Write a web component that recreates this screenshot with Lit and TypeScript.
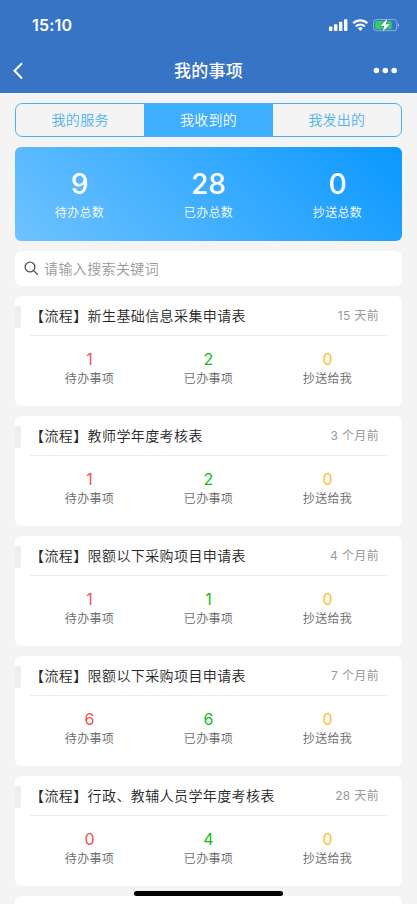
import { LitElement, html, css } from "lit";
import { customElement } from "lit/decorators.js";

interface Matter {
  title: string;
  time: string;
  counts: [number, number, number];
}

const totals = [
  { value: 9, label: "待办总数" },
  { value: 28, label: "已办总数" },
  { value: 0, label: "抄送总数" },
];

const matters: Matter[] = [
  { title: "【流程】新生基础信息采集申请表", time: "15 天前", counts: [1, 2, 0] },
  { title: "【流程】教师学年度考核表", time: "3 个月前", counts: [1, 2, 0] },
  { title: "【流程】限额以下采购项目申请表", time: "4 个月前", counts: [1, 1, 0] },
  { title: "【流程】限额以下采购项目申请表", time: "7 个月前", counts: [6, 6, 0] },
  { title: "【流程】行政、教辅人员学年度考核表", time: "28 天前", counts: [0, 4, 0] },
];

const kinds = [
  { cls: "todo", label: "待办事项" },
  { cls: "done", label: "已办事项" },
  { cls: "copy", label: "抄送给我" },
];

@customElement("app-root")
export class AppRoot extends LitElement {
  static styles = css`
    :host {
      display: flex;
      flex-direction: column;
      position: relative;
      height: 904px;
      overflow: hidden;
      background: #f4f4f4;
      font-family: Inter, "Noto Sans CJK SC", sans-serif;
      font-weight: 350;
      color: #333;
    }
    * {
      box-sizing: border-box;
    }
    .header {
      flex: none;
      height: 92.6px;
      background: #3774c6;
      color: #fff;
    }
    .status {
      display: flex;
      align-items: center;
      justify-content: space-between;
      height: 50px;
      padding: 0 17px 0 32px;
    }
    .clock {
      font-size: 16px;
      line-height: 20px;
      font-weight: 600;
      letter-spacing: 0.2px;
    }
    .nav {
      display: grid;
      grid-template-columns: 60px 1fr 60px;
      align-items: center;
      height: 41px;
    }
    .back {
      margin-left: 12px;
    }
    .more {
      justify-self: end;
      margin-right: 19px;
    }
    .title {
      text-align: center;
      font-size: 17px;
      line-height: 24px;
      font-weight: 500;
      letter-spacing: 0.3px;
    }
    svg {
      display: block;
    }
    .body {
      display: flex;
      flex-direction: column;
      gap: 10px;
      padding: 10.4px 15px 0;
    }
    .tabs {
      display: grid;
      grid-template-columns: repeat(3, 1fr);
      height: 34px;
      border: 1px solid #4db0f5;
      border-radius: 7px;
      overflow: hidden;
    }
    .tab {
      text-align: center;
      font-size: 14px;
      line-height: 31px;
      letter-spacing: 0.3px;
      color: #4db2f8;
    }
    .tab.active {
      background: #3eaeff;
      color: #fff;
    }
    .totals {
      display: grid;
      grid-template-columns: repeat(3, 1fr);
      height: 94px;
      padding-top: 19px;
      border-radius: 6px;
      background: linear-gradient(45deg, #6fc2ff, #0a98ff);
      color: #fff;
      text-align: center;
    }
    .total {
      font-size: 28px;
      line-height: 36px;
      font-weight: 550;
    }
    .label {
      font-size: 12px;
      line-height: 18px;
      letter-spacing: 0.35px;
    }
    .totals .label {
      margin-top: 2px;
    }
    .search {
      display: flex;
      align-items: center;
      gap: 5px;
      height: 34.6px;
      padding-left: 9px;
      border-radius: 7px;
      background: #fff;
      color: #999;
      font-size: 14px;
      letter-spacing: 0.38px;
    }
    .card {
      height: 110px;
      padding: 0 15px;
      border-radius: 6px;
      background: #fff;
      position: relative;
    }
    .card::before {
      content: "";
      position: absolute;
      left: 0;
      top: 10px;
      width: 6px;
      height: 22px;
      border-radius: 0 2px 2px 0;
      background: #eee;
    }
    .head {
      display: flex;
      align-items: center;
      justify-content: space-between;
      height: 40px;
      padding: 2px 8px 0 0;
      border-bottom: 1px solid #ebebeb;
    }
    .name {
      font-size: 14px;
      line-height: 20px;
      letter-spacing: 0.4px;
      color: #262626;
    }
    .time {
      font-size: 12px;
      line-height: 18px;
      letter-spacing: 0.35px;
      color: #999;
      font-weight: 400;
    }
    .counts {
      display: grid;
      grid-template-columns: repeat(3, 1fr);
      padding-top: 13px;
      text-align: center;
    }
    .counts .label {
      margin-top: 1px;
      color: #666;
    }
    .num {
      font-size: 16px;
      line-height: 20px;
      font-weight: 400;
    }
    .todo {
      color: #f24f4f;
    }
    .done {
      color: #10bd18;
    }
    .copy {
      color: #fbc02d;
    }
    .matters {
      display: flex;
      flex-direction: column;
      gap: 10px;
      padding-top: 0.3px;
    }
    .home {
      position: absolute;
      left: 134px;
      bottom: 8px;
      width: 149px;
      height: 5px;
      border-radius: 3px;
      background: #000;
    }
  `;

  private renderCard(m: Matter) {
    return html`<div class="card">
      <div class="head">
        <span class="name">${m.title}</span><span class="time">${m.time}</span>
      </div>
      <div class="counts">
        ${kinds.map(
          (k, i) => html`<div>
            <div class="num ${k.cls}">${m.counts[i]}</div>
            <div class="label">${k.label}</div>
          </div>`
        )}
      </div>
    </div>`;
  }

  render() {
    return html`
      <div class="header">
        <div class="status">
          <span class="clock">15:10</span>
          <svg width="72" height="14" viewBox="0 0 72 14">
            <g fill="#fff">
              <rect x="1" y="8.4" width="3.4" height="4.6" rx=".8" />
              <rect x="6" y="6.3" width="3.4" height="6.7" rx=".8" />
              <rect x="11" y="3.8" width="3.4" height="9.2" rx=".8" />
              <rect x="16" y="1.2" width="3.4" height="11.8" rx=".8" />
              <path d="M32.3 12.9 29.8 10.3a3.6 3.6 0 0 1 5 0Z" />
            </g>
            <g fill="none" stroke="#fff" stroke-width="2.2">
              <path d="M25.2 5.3a10.2 10.2 0 0 1 14.2 0" />
              <path d="M27.8 8.4a6.3 6.3 0 0 1 9 0" />
            </g>
            <rect x="45.6" y="1.5" width="23.3" height="11.2" rx="3" fill="none" stroke="#fff" stroke-opacity=".42" />
            <path d="M70 5.2c1.7.6 1.7 3.2 0 3.8Z" fill="#fff" fill-opacity=".45" />
            <rect x="47.2" y="3" width="16.5" height="8.2" rx="1.6" fill="#30d158" />
            <path d="M59.4.6 52.5 8h3.8l-1.8 5.8L62 6.2h-4.1Z" fill="#fff" stroke="#3774c6" stroke-width="1" paint-order="stroke" />
          </svg>
        </div>
        <div class="nav">
          <svg class="back" width="12" height="20" viewBox="0 0 12 20">
            <path d="M10 2.2 2.5 9.8 10 17.5" fill="none" stroke="#fff" stroke-width="2" />
          </svg>
          <span class="title">我的事项</span>
          <svg class="more" width="26" height="8" viewBox="0 0 26 8" fill="#fff">
            <circle cx="4.4" cy="3.5" r="2.8" />
            <circle cx="13.3" cy="3.5" r="2.8" />
            <circle cx="22.2" cy="3.5" r="2.8" />
          </svg>
        </div>
      </div>
      <div class="body">
        <div class="tabs">
          <div class="tab">我的服务</div>
          <div class="tab active">我收到的</div>
          <div class="tab">我发出的</div>
        </div>
        <div class="totals">
          ${totals.map(
            (t) => html`<div>
              <div class="total">${t.value}</div>
              <div class="label">${t.label}</div>
            </div>`
          )}
        </div>
        <div class="search">
          <svg width="15" height="15" viewBox="0 0 15 15" fill="none" stroke="#555" stroke-width="1.3">
            <circle cx="6" cy="6" r="4.9" />
            <path d="m9.6 9.6 4.3 4.2" />
          </svg>
          <span>请输入搜索关键词</span>
        </div>
        <div class="matters">
          ${matters.map((m) => this.renderCard(m))}
          <div class="card"></div>
        </div>
      </div>
      <div class="home"></div>
    `;
  }
}
